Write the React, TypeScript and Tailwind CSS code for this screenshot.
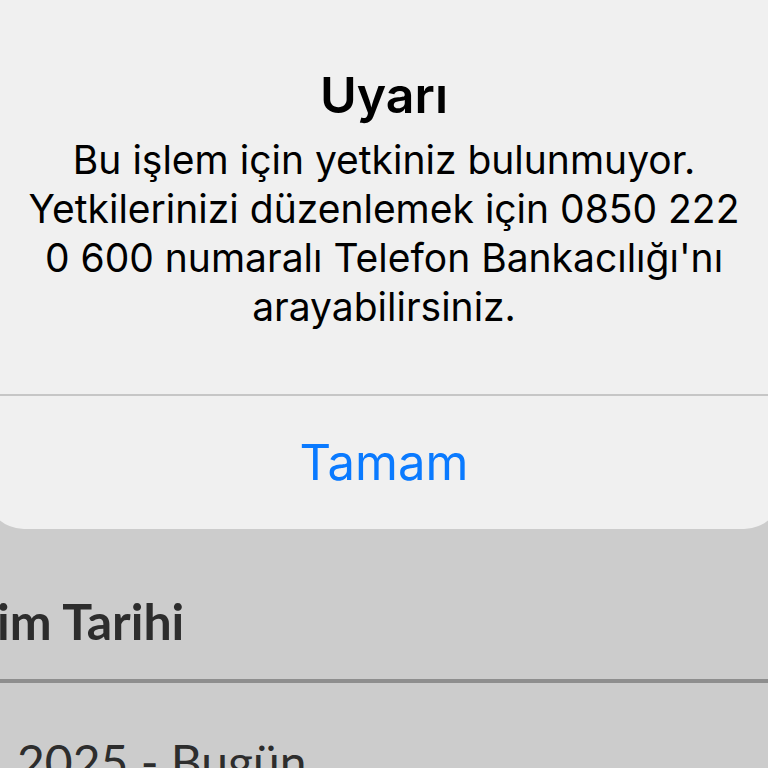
export default function App() {
  return (
    <main className="relative h-[768px] w-[768px] overflow-hidden bg-[#cccccc]">
      <section className="-mx-[14px] rounded-b-[38px] bg-[#f0f0f0] font-['Inter',sans-serif]">
        <div className="flex flex-col items-center pt-[65px] pb-[63px] text-center text-black">
          <h2 className="text-[50px] leading-[60px] font-semibold">Uyarı</h2>
          <p className="mt-[10px] text-[39px] leading-[49px]">
            Bu işlem için yetkiniz bulunmuyor.
            <br />
            Yetkilerinizi düzenlemek için 0850 222
            <br />
            0 600 numaralı Telefon Bankacılığı'nı
            <br />
            arayabilirsiniz.
          </p>
        </div>
        <button className="flex h-[135px] w-full items-center justify-center border-t-2 border-[#c6c6c6] text-[49px] text-[#0a7aff]">
          Tamam
        </button>
      </section>

      <div className="font-['Lato',sans-serif] text-[#2d2d2d]">
        <div className="pt-[67px] pb-[33px] -ml-[3px]">
          <h3 className="text-[50px] leading-[50px] font-bold">im Tarihi</h3>
        </div>
        <div className="h-[4px] bg-[#8e8e8e]" />
        <div className="px-[17px] pt-[55px]">
          <span className="text-[48px] leading-[48px]">2025 - Bugün</span>
        </div>
      </div>
    </main>
  )
}
